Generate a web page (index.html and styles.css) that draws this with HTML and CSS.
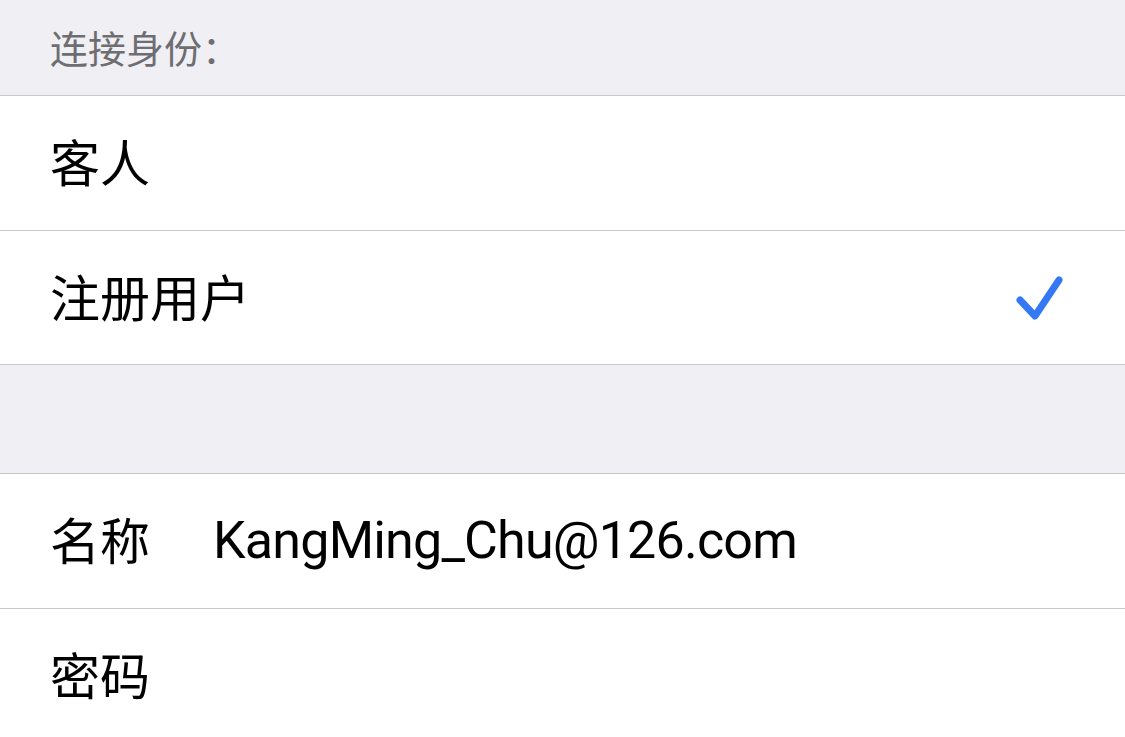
FILE: index.html
```html
<!DOCTYPE html>
<html lang="zh-CN">
<head>
<meta charset="utf-8">
<title>连接身份</title>
<link rel="stylesheet" href="styles.css">
</head>
<body>
<div class="page">
  <div class="section-header"><span class="header-text">连接身份：</span></div>
  <div class="group">
    <div class="row"><span class="label">客人</span></div>
    <div class="row"><span class="label">注册用户</span>
      <svg class="check" width="50" height="50" viewBox="0 0 50 50" aria-hidden="true">
        <path d="M6 25 L21 41 L45 5" fill="none" stroke="#3478f6" stroke-width="7" stroke-linecap="round" stroke-linejoin="round"/>
      </svg>
    </div>
  </div>
  <div class="spacer"></div>
  <div class="group">
    <div class="row"><span class="label field-label">名称</span><span class="value">KangMing_Chu@126.com</span></div>
    <div class="row last"><span class="label field-label">密码</span></div>
  </div>
</div>
</body>
</html>
```

FILE: styles.css
```css
html, body {
  margin: 0;
  padding: 0;
  background: #efeff4;
}
.page {
  width: 1125px;
  height: 737px;
  overflow: hidden;
  background: #efeff4;
  font-family: "Noto Sans CJK SC", sans-serif;
}
.section-header {
  box-sizing: border-box;
  height: 96px;
  border-bottom: 1px solid #c8c7cc;
  display: flex;
  align-items: center;
  padding: 0 0 0 50px;
}
.header-text {
  font-size: 38px;
  line-height: 1;
  color: #6d6d72;
  margin-top: -2px;
}
.group {
  background: #ffffff;
}
.row {
  box-sizing: border-box;
  height: 134.5px;
  border-bottom: 1px solid #c8c7cc;
  display: flex;
  align-items: center;
  padding: 0 61px 0 50px;
  background: #ffffff;
}
.row.last {
  border-bottom: none;
}
.label {
  font-size: 50px;
  line-height: 1;
  color: #000000;
  flex: 0 0 auto;
  margin-top: -5px;
}
.field-label {
  width: 163px;
}
.value {
  font-family: Roboto, "Noto Sans CJK SC", sans-serif;
  font-size: 52px;
  letter-spacing: -0.8px;
  line-height: 1;
  color: #000000;
}
.check {
  margin-left: auto;
  margin-top: 5px;
}
.spacer {
  box-sizing: border-box;
  height: 109px;
  border-bottom: 1px solid #c8c7cc;
  background: #efeff4;
}
```
